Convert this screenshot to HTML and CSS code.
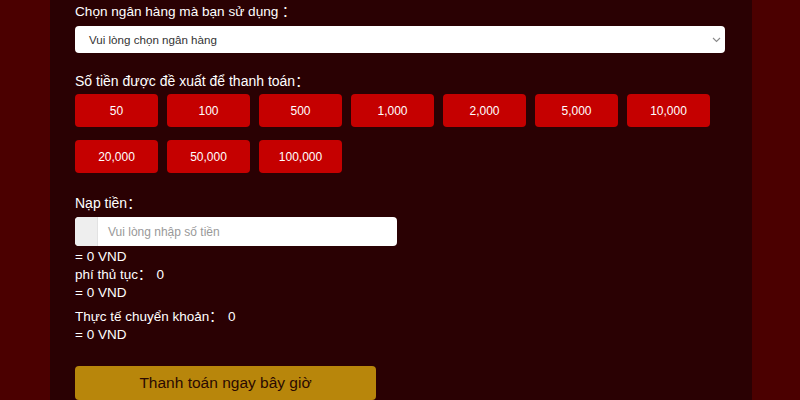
FILE: index.html
```html
<!DOCTYPE html>
<html lang="vi">
<head>
<meta charset="utf-8">
<title>Nạp tiền</title>
<link rel="stylesheet" href="styles.css">
</head>
<body>
<div class="page">
  <main class="panel">
    <div class="label first">Chọn ngân hàng mà bạn sử dụng ：</div>
    <div class="select">
      <span>Vui lòng chọn ngân hàng</span>
      <svg class="chev" width="9" height="6" viewBox="0 0 9 6"><path d="M1 1 L4.5 4.5 L8 1" fill="none" stroke="#8a8a8a" stroke-width="1.1"/></svg>
    </div>

    <div class="label second">Số tiền được đề xuất để thanh toán：</div>
    <div class="amounts">
      <button class="amt">50</button>
      <button class="amt">100</button>
      <button class="amt">500</button>
      <button class="amt">1,000</button>
      <button class="amt">2,000</button>
      <button class="amt">5,000</button>
      <button class="amt">10,000</button>
      <button class="amt">20,000</button>
      <button class="amt">50,000</button>
      <button class="amt">100,000</button>
    </div>

    <div class="label third">Nạp tiền：</div>
    <div class="input">
      <span class="addon"></span>
      <span class="ph">Vui lòng nhập số tiền</span>
    </div>

    <div class="results">
      <div class="line">= 0 VND</div>
      <div class="line">phí thủ tục：<span class="val">0</span></div>
      <div class="line">= 0 VND</div>
      <div class="line gap">Thực tế chuyển khoản：<span class="val">0</span></div>
      <div class="line">= 0 VND</div>
    </div>

    <button class="pay">Thanh toán ngay bây giờ</button>
  </main>
</div>
</body>
</html>
```
FILE: styles.css
```css
html, body {
  margin: 0;
  padding: 0;
  height: 100%;
  overflow: hidden;
}
body {
  background: #4b0000;
  font-family: "Liberation Sans", Arial, "Noto Sans CJK SC", sans-serif;
  color: #ffffff;
}
.page {
  display: flex;
  height: 400px;
}
.panel {
  margin-left: 50px;
  width: 702px;
  box-sizing: border-box;
  padding: 2px 25px 0 25px;
  background: #2a0103;
  display: flex;
  flex-direction: column;
  align-items: flex-start;
}
.label {
  font-size: 14px;
  line-height: 20px;
  color: #ffffff;
}
.label.first { font-size: 13.6px; }
.label.second { margin-top: 18px; }
.label.third { margin-top: 20px; }
.select {
  margin-top: 4px;
  width: 650px;
  height: 27px;
  box-sizing: border-box;
  background: #ffffff;
  border-radius: 4px;
  display: flex;
  align-items: center;
  justify-content: space-between;
  padding: 0 4px 0 14px;
  font-size: 11.6px;
  color: #333333;
}
.chev { margin-top: 1px; }
.amounts {
  margin-top: 3px;
  display: grid;
  grid-template-columns: repeat(7, 83px);
  column-gap: 9px;
  row-gap: 13px;
}
.amt {
  width: 83px;
  height: 33px;
  border: none;
  border-radius: 4px;
  background: #c50000;
  color: #ffffff;
  font-family: "Liberation Sans", Arial, sans-serif;
  font-size: 12px;
  padding: 0;
}
.input {
  margin-top: 4px;
  width: 322px;
  height: 29px;
  background: #ffffff;
  border-radius: 4px;
  display: flex;
  align-items: center;
  overflow: hidden;
}
.addon {
  width: 22px;
  height: 100%;
  background: #eeeeee;
  border-right: 1px solid #e2e2e2;
}
.ph {
  margin-left: 10px;
  font-size: 12px;
  color: #999999;
}
.results {
  margin-top: 2px;
  display: flex;
  flex-direction: column;
}
.line {
  font-size: 13.5px;
  line-height: 18px;
}
.line.gap { margin-top: 6px; }
.val { margin-left: 5px; }
.pay {
  margin-top: 22px;
  width: 301px;
  height: 34px;
  border: none;
  border-radius: 4px;
  background: #b8860b;
  color: #2a0a02;
  font-family: "Liberation Sans", Arial, sans-serif;
  font-size: 15.5px;
  padding: 0;
  flex-shrink: 0;
}
```
